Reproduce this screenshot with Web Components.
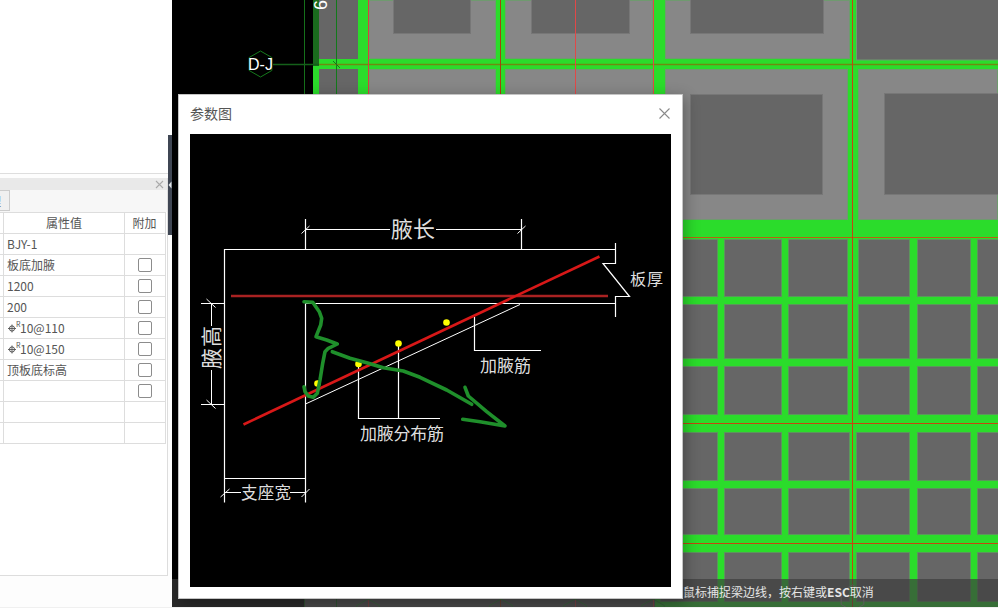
<!DOCTYPE html>
<html lang="zh">
<head>
<meta charset="utf-8">
<title>参数图</title>
<style>
html,body{margin:0;padding:0;background:#fff;overflow:hidden}
body{font-family:"Noto Sans CJK SC","Liberation Sans",sans-serif;font-size:12px}
</style>
</head>
<body>
<app-shell>
  <prop-panel slot="side">
    <prop-row head value="属性值" extra="附加"></prop-row>
    <prop-row value="BJY-1"></prop-row>
    <prop-row value="板底加腋" check></prop-row>
    <prop-row value="1200" check></prop-row>
    <prop-row value="200" check></prop-row>
    <prop-row steel value="10@110" check></prop-row>
    <prop-row steel value="10@150" check></prop-row>
    <prop-row value="顶板底标高" check></prop-row>
    <prop-row check></prop-row>
    <prop-row></prop-row>
    <prop-row></prop-row>
  </prop-panel>
  <cad-canvas slot="main">
    <hint-bar>鼠标捕捉梁边线，按右键或<b>ESC</b>取消</hint-bar>
    <param-dialog heading="参数图"><haunch-diagram></haunch-diagram></param-dialog>
  </cad-canvas>
</app-shell>
<script>
function shadow(el, html){ el.attachShadow({mode:'open'}).innerHTML = html; }

customElements.define('app-shell', class extends HTMLElement{
  constructor(){super();shadow(this,`<style>
    :host{display:grid;grid-template-columns:172px 826px;grid-template-rows:607px 1px;width:998px;height:608px;background:#f0f0f0;overflow:hidden}
    .foot{grid-column:1 / 3;background:#f0f0f0}
  </style><slot name="side"></slot><slot name="main"></slot><div class="foot"></div>`);}
});

customElements.define('prop-panel', class extends HTMLElement{
  constructor(){super();shadow(this,`<style>
    :host{display:flex;flex-direction:column;position:relative;background:#fdfdfd;height:607px;overflow:hidden;color:#555}
    .top{height:173px;flex:none;background:#fff;border-bottom:1px solid #dedede}
    .win{margin-top:4px;width:167px;height:397px;flex:none;background:#fff;border-right:1px solid #ddd;border-bottom:1px solid #ddd;display:flex;flex-direction:column}
    .title{height:12px;flex:none;background:#e9e9e9;display:flex;justify-content:flex-end;align-items:center;padding-right:3px}
    .bar{height:22px;flex:none;background:#f7f7f7;display:flex;overflow:hidden}
    .tab{margin-left:-14px;width:24px;height:21px;box-sizing:border-box;background:#f0f0f0;border:1px solid #ccc;padding-right:8px;font-size:12px;line-height:19px;text-align:right;color:#555}
    .table{width:166px;display:flex;flex-direction:column;border-top:1px solid #ddd}
    .split{position:absolute;left:168px;top:135px;width:4px;height:100px;background:#3f4653}
    .split svg{position:absolute;left:0;top:46px}
  </style>
  <div class="top"></div>
  <div class="win">
    <div class="title"><svg width="9" height="9" viewBox="0 0 9 9"><path d="M1 1L8 8M8 1L1 8" stroke="#aaa" stroke-width="1.1" fill="none"/></svg></div>
    <div class="bar"><div class="tab">理</div></div>
    <div class="table"><slot></slot></div>
  </div>
  <div class="split"><svg width="4" height="8" viewBox="0 0 4 8"><path d="M3.5 .5V7.5L.5 4Z" fill="#dfe3e8"/></svg></div>`);}
});

customElements.define('prop-row', class extends HTMLElement{
  connectedCallback(){
    if(this.shadowRoot) return;
    const head=this.hasAttribute('head');
    const v=this.getAttribute('value')||'';
    const steel=this.hasAttribute('steel')?`<svg class="st" width="8" height="9" viewBox="0 0 8 9"><circle cx="4" cy="4.5" r="2.6" fill="none" stroke="#555"/><path d="M4 .5V8.5M0 4.5H8" stroke="#555" stroke-width=".9"/></svg><sup>R</sup>`:'';
    const right=head?(this.getAttribute('extra')||''):(this.hasAttribute('check')?'<span class="cb"></span>':'');
    shadow(this,`<style>
      :host{display:grid;grid-template-columns:4px 121px 41px;height:21px;box-sizing:border-box;border-bottom:1px solid #ddd;background:#fff;color:#555;font:12px/20px "Noto Sans CJK SC","Liberation Sans",sans-serif}
      div{box-sizing:border-box;border-right:1px solid #ddd;min-width:0;white-space:nowrap}
      .v{padding-left:${head?0:3}px;text-align:${head?'center':'left'};display:flex;align-items:center;justify-content:${head?'center':'flex-start'}}
      .x{display:flex;align-items:center;justify-content:center;padding-right:1px}
      .cb{width:14px;height:14px;box-sizing:border-box;border:1px solid #8c8c8c;border-radius:2px;background:#fff}
      .st{flex:none;margin-left:1px}
      sup{font-size:7px;line-height:7px;align-self:flex-start;margin:3px 0 0 0;width:4px;color:#555}
    </style><div></div><div class="v">${steel}<span>${v}</span></div><div class="x">${right}</div>`);
  }
});

customElements.define('cad-canvas', class extends HTMLElement{
  constructor(){super();
    const G='#2bdc2b', L='#878787', D='#666666';
    const r=(x,y,w,h,f,s)=>`<rect x="${x}" y="${y}" width="${w}" height="${h}" fill="${f}"${s?` stroke="${s}" stroke-width="1"`:''}/>`;
    let o='';
    o+=r(172,0,826,607,'#000');
    o+=r(319,59,679,543,G)+r(358,0,640,60,G);
    o+=r(313,0,6,66,'#1a6b1d')+r(313,66,6,40,G);
    o+=r(319,0,39,59,D)+r(319,69,39,40,D);
    const edge='#6f9a6f';
    [[369,0,127,59],[505,0,148,59],[665,0,185,59],[369,69,127,60],[505,69,148,60],[665,69,183,151],[858,69,140,151]].forEach(a=>o+=r(a[0]+.5,a[1]+.5,a[2]-1,a[3]-1,L,edge));
    o+=r(856.5,-1,142,61,D,edge);
    [[393,-1,77,34],[531,-1,98,34],[690,-1,133,34],[690,94,132,100],[884,93,115,101]].forEach(a=>o+=r(a[0]+.5,a[1]+.5,a[2],a[3],D,'#777'));
    const rows=[[239,297],[304,359],[366,415],[432,481],[488,535],[552,602]];
    rows.forEach((y,i)=>{
      const xs=[[660,718],[724,782],[788,i>2?850:848],[i>2?856:858,910],[917,971],[977,1000]];
      xs.forEach(x=>o+=r(x[0]+.5,y[0]+.5,x[1]-x[0]-1,y[1]-y[0]-1,D,'#5c955c'));
    });
    o+=r(304,599,351,8,D);
    o+=r(655,602,343,5,G);
    const ln=(a,b,c,d,s,w)=>`<line x1="${a}" y1="${b}" x2="${c}" y2="${d}" stroke="${s}" stroke-width="${w||1}"/>`;
    o+=ln(304.5,0,304.5,607,'#15701a')+ln(336.5,0,336.5,607,'#127a1a');
    o+=ln(273,64.5,319,64.5,'#14601a',1.5)+ln(319,64.5,998,64.5,'#6f8a10',1.5);
    o+=ln(333,61,340,68,'#127a1a');
    o+=ln(660,237.5,998,237.5,'#b8620f')+ln(660,423.5,998,423.5,'#c5460f')+ln(660,543.5,998,543.5,'#c5460f');
    o+=ln(368.5,0,368.5,607,'#d84040')+ln(500.5,0,500.5,607,'#a2420f')+ln(575.5,0,575.5,607,'#e04848')+ln(653.5,0,653.5,607,'#e04848')+ln(852.5,0,852.5,607,'#c5460f');
    const hex=(x,y,R,s)=>{const p=[];for(let i=0;i<6;i++){const t=Math.PI/3*i-Math.PI/2;p.push((x+R*Math.cos(t)).toFixed(1)+','+(y+R*Math.sin(t)).toFixed(1));}return `<polygon points="${p.join(' ')}" fill="none" stroke="${s}"/>`;};
    o+=hex(260.5,64,13,'#157a1c');
    [368,501,575,653].forEach(x=>o+=hex(x,612,13,'#2f9a35'));
    o+=hex(852.5,598,13,'#9a9a9a');
    o+=`<text x="260.5" y="69.5" text-anchor="middle" font-size="16" fill="#fff" font-family="Liberation Sans,sans-serif">D-J</text>`;
    o+=`<text transform="translate(327,10) rotate(-90)" font-size="18" fill="#fff" font-family="Liberation Sans,sans-serif">6</text>`;
    shadow(this,`<style>
      :host{display:block;position:relative;width:826px;height:607px;overflow:hidden;background:#000}
      svg{display:block}
    </style><svg width="826" height="607" viewBox="172 0 826 607">${o}</svg><slot></slot>`);
  }
});

customElements.define('hint-bar', class extends HTMLElement{
  constructor(){super();shadow(this,`<style>
    :host{position:absolute;left:0;right:0;top:579px;height:28px;box-sizing:border-box;padding:0 0 3px 511px;background:rgba(61,61,61,.69);color:#e6e6e6;font:12px/25px "Noto Sans CJK SC","Liberation Sans",sans-serif;white-space:nowrap}
    ::slotted(b){font-weight:700}
  </style><slot></slot>`);}
});

customElements.define('param-dialog', class extends HTMLElement{
  connectedCallback(){
    if(this.shadowRoot) return;
    shadow(this,`<style>
      :host{position:absolute;left:6px;top:94px;width:505px;height:505px;box-sizing:border-box;background:#fff;border:1px solid #c4c4c4;box-shadow:2px 4px 14px rgba(0,0,0,.32);display:flex;flex-direction:column;padding:0 11px 11px 11px}
      header{flex:none;height:39px;padding-bottom:3px;box-sizing:border-box;display:flex;align-items:center;justify-content:space-between;color:#555;font:14px/20px "Noto Sans CJK SC","Liberation Sans",sans-serif}
      svg{margin:1px 1px 0 0}
      main{flex:1;min-height:0;background:#000}
    </style><header><span>${this.getAttribute('heading')||''}</span><svg width="11" height="11" viewBox="0 0 11 11"><path d="M.5 .5L10.5 10.5M10.5 .5L.5 10.5" stroke="#8a8a8a" stroke-width="1.1" fill="none"/></svg></header><main><slot></slot></main>`);
  }
});

customElements.define('haunch-diagram', class extends HTMLElement{
  constructor(){super();
    const w=(d,sw)=>`<path d="${d}" fill="none" stroke="#fff" stroke-width="${sw||1}"/>`;
    const t=(x,y,s,fs,len)=>`<text x="${x}" y="${y}" font-size="${fs}" textLength="${len}" lengthAdjust="spacing">${s}</text>`;
    shadow(this,`<style>
      :host{display:block;width:481px;height:453px;background:#000}
      svg{display:block}
      text{fill:#dedede;font-family:"Noto Sans CJK SC",sans-serif;font-weight:400}
    </style><svg width="481" height="453" viewBox="190 134 481 453">
      ${w('M224.5 502.5V249.5H615.5M305.5 219V249.5M521.5 219V249.5M615.5 243V263.5H603L629.5 296.5H615.5V317M305.5 303.5H615.5M305.5 303.5V502.5M224.5 478.5H305.5',1.2)}
      ${w('M305 229.5H390M436 229.5H521.5M301.5 233.5L309.5 226M517.5 233.5L525.5 226')}
      ${w('M201 303.5H224.5M201 404.5H224.5M211.5 303.5V326M211.5 370V404.5M206.5 299L215.5 307.5M206.5 400L215.5 408.5')}
      ${w('M224.5 492.5H241M290 492.5H305.5M220.5 497L229.5 489M301.5 497L309.5 489')}
      ${w('M305.5 404L520 304.5')}
      ${w('M474.5 317V350.5H541M358.5 363V418.5H440M398.5 343V418.5',1.2)}
      <path d="M231 296H608" stroke="#a92222" stroke-width="2.6" fill="none"/>
      <path d="M243.5 424.5L599.5 256.5" stroke="#d81818" stroke-width="2.6" fill="none"/>
      <g fill="#ffff00"><circle cx="446.5" cy="322.5" r="3.3"/><circle cx="398.5" cy="343.5" r="3.3"/><circle cx="358.5" cy="364" r="3.3"/><circle cx="317.5" cy="383.5" r="3.3"/></g>
      <g fill="none" stroke="#1f8f2b" stroke-width="3.6" stroke-linejoin="round" stroke-linecap="round">
        <path d="M304 301.7L312.7 302.3L319.3 311.7L321.7 318.3L320.7 325L316 336.7L326.7 340L337.3 344L328.3 348.3L325 351.7L322.7 363.3L320 380L317.3 393.3L313.3 397.3L308.3 396L305 391.7L304 386.7"/>
        <path d="M332.3 351.7L350 358.3L366.7 362.7L383.3 367.7L403.3 371L420 377.3L446.7 390L471.7 404.3"/>
        <path d="M465 387.3L468.3 396L486.7 411.7L505 426L480 421.7L462.7 419.3"/>
      </g>
      ${t(391,237,'腋长',22,44)}
      ${t(630,284.5,'板厚',16,33)}
      ${t(480,371.5,'加腋筋',17,51)}
      ${t(360,439.5,'加腋分布筋',17,84)}
      ${t(241,498.5,'支座宽',16.5,50)}
      <text transform="translate(219,369) rotate(-90)" font-size="21" textLength="43" lengthAdjust="spacing">腋高</text>
    </svg>`);
  }
});
</script>
</body>
</html>
